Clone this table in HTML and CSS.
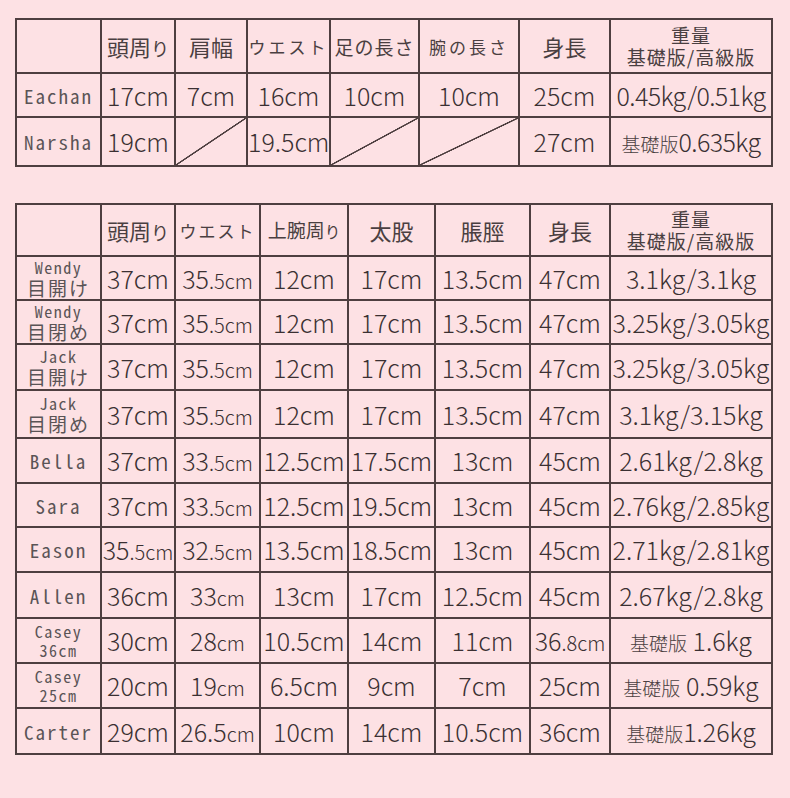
FILE: index.html
```html
<!DOCTYPE html>
<html lang="ja">
<head>
<meta charset="utf-8">
<link rel="stylesheet" href="styles.css">
</head>
<body>
<table class="grid t1">
  <colgroup>
    <col style="width:85px"><col style="width:74px"><col style="width:72px"><col style="width:83px"><col style="width:89px"><col style="width:100px"><col style="width:91px"><col style="width:162px">
  </colgroup>
  <tr class="hd h54">
    <th></th>
    <th class="jp">頭周<span class="sm">り</span></th>
    <th class="jp">肩幅</th>
    <th class="jp kana">ウエスト</th>
    <th class="jp mid">足の長さ</th>
    <th class="jp kana">腕の長さ</th>
    <th class="jp">身長</th>
    <th class="jp wt"><span>重量</span><span>基礎版/高級版</span></th>
  </tr>
  <tr class="h44">
    <td class="name">Eachan</td>
    <td>17cm</td><td>7cm</td><td>16cm</td><td>10cm</td><td>10cm</td><td>25cm</td><td class="narrow">0.45kg/0.51kg</td>
  </tr>
  <tr class="h49">
    <td class="name">Narsha</td>
    <td>19cm</td><td class="slash"></td><td>19.5cm</td><td class="slash"></td><td class="slash"></td><td>27cm</td><td class="narrow"><span class="ed">基礎版</span>0.635kg</td>
  </tr>
</table>

<table class="grid t2">
  <colgroup>
    <col style="width:85px"><col style="width:74px"><col style="width:85px"><col style="width:88px"><col style="width:87px"><col style="width:95px"><col style="width:80px"><col style="width:162px">
  </colgroup>
  <tr class="hd h52">
    <th></th>
    <th class="jp">頭周<span class="sm">り</span></th>
    <th class="jp kana tight">ウエスト</th>
    <th class="jp small">上腕周<span class="sm">り</span></th>
    <th class="jp">太股</th>
    <th class="jp">脹脛</th>
    <th class="jp">身長</th>
    <th class="jp wt"><span>重量</span><span>基礎版/高級版</span></th>
  </tr>
  <tr class="h44">
    <td class="name two"><span class="en">Wendy</span><span class="ja">目開け</span></td>
    <td>37cm</td><td>35<span class="u">.5cm</span></td><td>12cm</td><td>17cm</td><td>13.5cm</td><td>47cm</td><td>3.1kg/3.1kg</td>
  </tr>
  <tr class="h44">
    <td class="name two"><span class="en">Wendy</span><span class="ja">目閉め</span></td>
    <td>37cm</td><td>35<span class="u">.5cm</span></td><td>12cm</td><td>17cm</td><td>13.5cm</td><td>47cm</td><td>3.25kg/3.05kg</td>
  </tr>
  <tr class="h46">
    <td class="name two"><span class="en">Jack</span><span class="ja">目開け</span></td>
    <td>37cm</td><td>35<span class="u">.5cm</span></td><td>12cm</td><td>17cm</td><td>13.5cm</td><td>47cm</td><td>3.25kg/3.05kg</td>
  </tr>
  <tr class="h48">
    <td class="name two"><span class="en">Jack</span><span class="ja">目閉め</span></td>
    <td>37cm</td><td>35<span class="u">.5cm</span></td><td>12cm</td><td>17cm</td><td>13.5cm</td><td>47cm</td><td>3.1kg/3.15kg</td>
  </tr>
  <tr class="h45">
    <td class="name">Bella</td>
    <td>37cm</td><td>33<span class="u">.5cm</span></td><td>12.5cm</td><td>17.5cm</td><td>13cm</td><td>45cm</td><td>2.61kg/2.8kg</td>
  </tr>
  <tr class="h44">
    <td class="name">Sara</td>
    <td>37cm</td><td>33<span class="u">.5cm</span></td><td>12.5cm</td><td>19.5cm</td><td>13cm</td><td>45cm</td><td>2.76kg/2.85kg</td>
  </tr>
  <tr class="h45">
    <td class="name">Eason</td>
    <td>35<span class="u">.5cm</span></td><td>32<span class="u">.5cm</span></td><td>13.5cm</td><td>18.5cm</td><td>13cm</td><td>45cm</td><td>2.71kg/2.81kg</td>
  </tr>
  <tr class="h46">
    <td class="name">Allen</td>
    <td>36cm</td><td>33<span class="u">cm</span></td><td>13cm</td><td>17cm</td><td>12.5cm</td><td>45cm</td><td>2.67kg/2.8kg</td>
  </tr>
  <tr class="h45">
    <td class="name two"><span class="en">Casey</span><span class="en">36cm</span></td>
    <td>30cm</td><td>28<span class="u">cm</span></td><td>10.5cm</td><td>14cm</td><td>11cm</td><td>36<span class="u">.8cm</span></td><td><span class="ed">基礎版</span> 1.6kg</td>
  </tr>
  <tr class="h45">
    <td class="name two"><span class="en">Casey</span><span class="en">25cm</span></td>
    <td>20cm</td><td>19<span class="u">cm</span></td><td>6.5cm</td><td>9cm</td><td>7cm</td><td>25cm</td><td><span class="ed">基礎版</span> 0.59kg</td>
  </tr>
  <tr class="h46">
    <td class="name">Carter</td>
    <td>29cm</td><td>26.5<span class="u">cm</span></td><td>10cm</td><td>14cm</td><td>10.5cm</td><td>36cm</td><td><span class="ed">基礎版</span>1.26kg</td>
  </tr>
</table>
</body>
</html>
```

FILE: styles.css
```css
html, body {
  margin: 0;
  padding: 0;
  background: #fde1e4;
}
body {
  width: 790px;
  height: 798px;
  overflow: hidden;
  padding-top: 18px;
  box-sizing: border-box;
  font-family: "Noto Sans CJK JP", "Noto Sans", sans-serif;
  color: #3a3032;
}
.grid {
  border-collapse: collapse;
  table-layout: fixed;
  width: 758px;
  margin-left: 15px;
}
.t2 {
  margin-top: 36px;
}
.grid th, .grid td {
  border: 2px solid #4e3f40;
  padding: 0;
  text-align: center;
  vertical-align: middle;
  white-space: nowrap;
  overflow: hidden;
  font-size: 25px;
  font-weight: 300;
  line-height: 1;
  letter-spacing: 0;
}
.grid td.narrow {
  letter-spacing: -0.6px;
}
.h54 { height: 54px; }
.h52 { height: 52px; }
.h49 { height: 49px; }
.h48 { height: 48px; }
.h46 { height: 46px; }
.h45 { height: 45px; }
.h44 { height: 44px; }

.hd th {
  color: #4a3f41;
  font-weight: 400;
}
.jp {
  font-size: 22px !important;
  letter-spacing: 0 !important;
}
.jp.kana {
  font-size: 17px !important;
  letter-spacing: 3px !important;
}
.jp.kana.tight {
  letter-spacing: 2px !important;
}
.jp.mid {
  font-size: 19px !important;
  letter-spacing: 1px !important;
}
.jp.small {
  font-size: 19px !important;
}
.sm {
  font-size: 0.82em;
}
.wt {
  font-size: 19px !important;
}
.wt span {
  display: block;
  line-height: 22px;
  letter-spacing: 1px;
}
.u {
  font-size: 20px;
  letter-spacing: 0;
}
.ed {
  font-size: 19px;
  color: #4a3f41;
  letter-spacing: 0;
}
.name {
  font-family: "Noto Sans Mono CJK JP", "Liberation Mono", "DejaVu Sans Mono", monospace;
  font-size: 19px !important;
  font-weight: 400 !important;
  color: #5a5456;
  letter-spacing: 2px !important;
}
.name.two span {
  display: block;
}
.name .en {
  font-size: 16px;
  line-height: 19px;
  letter-spacing: 1.5px;
}
.name .ja {
  font-size: 19px;
  line-height: 22px;
  letter-spacing: 2px;
}
.slash {
  background: linear-gradient(to bottom right, transparent calc(50% - 1px), #4e3f40 calc(50% - 0.5px), #4e3f40 calc(50% + 0.5px), transparent calc(50% + 1px));
}
```
